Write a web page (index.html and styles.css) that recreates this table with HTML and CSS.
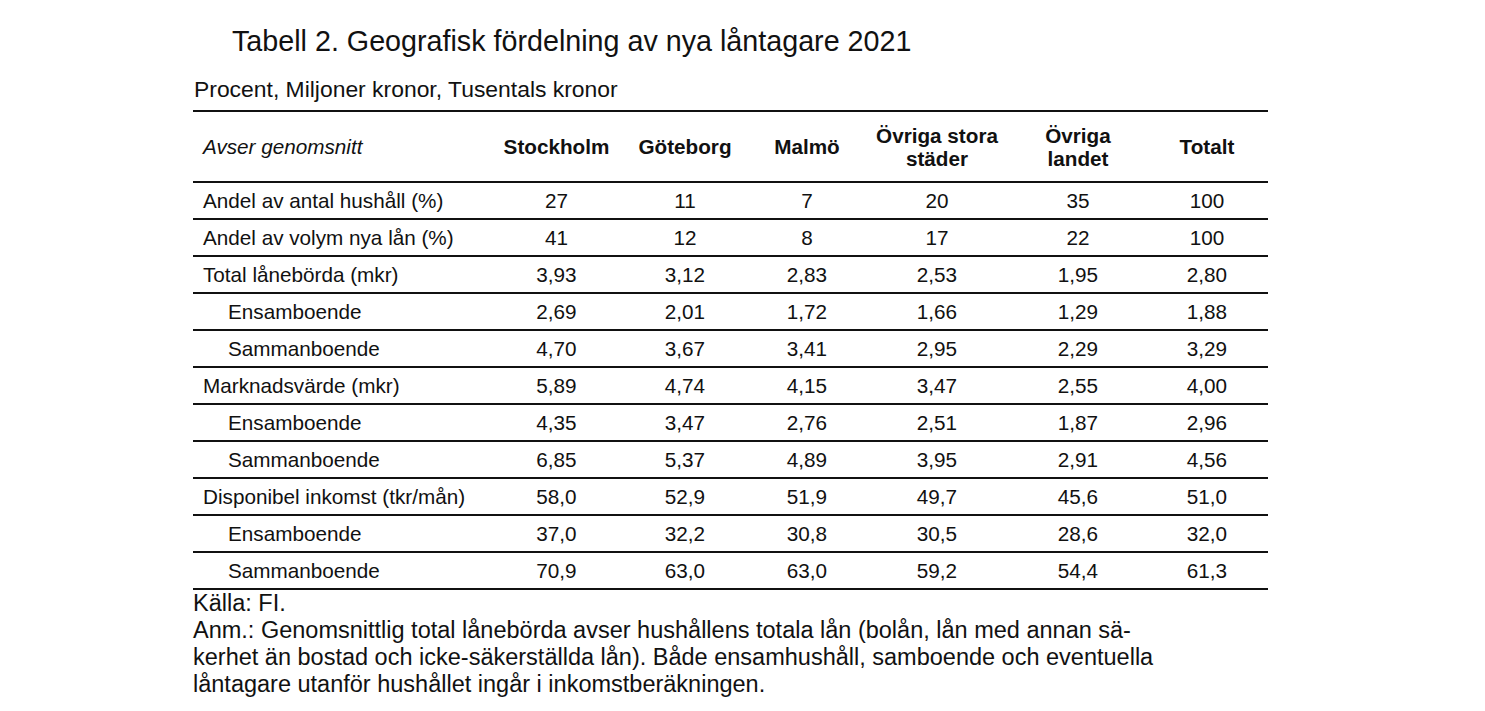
FILE: index.html
```html
<!DOCTYPE html>
<html lang="sv">
<head>
<meta charset="utf-8">
<title>Tabell 2</title>
<link rel="stylesheet" href="styles.css">
</head>
<body>
<div class="page">
  <h1 class="title">Tabell 2. Geografisk fördelning av nya låntagare 2021</h1>
  <p class="subtitle">Procent, Miljoner kronor, Tusentals kronor</p>
  <table class="data">
    <colgroup>
      <col class="c-label"><col class="c-sth"><col class="c-gbg"><col class="c-mmo"><col class="c-ovs"><col class="c-ovl"><col class="c-tot">
    </colgroup>
    <thead>
      <tr>
        <th class="label">Avser genomsnitt</th>
        <th>Stockholm</th>
        <th>Göteborg</th>
        <th>Malmö</th>
        <th>Övriga stora<br>städer</th>
        <th>Övriga<br>landet</th>
        <th>Totalt</th>
      </tr>
    </thead>
    <tbody>
      <tr><td class="label">Andel av antal hushåll (%)</td><td>27</td><td>11</td><td>7</td><td>20</td><td>35</td><td>100</td></tr>
      <tr><td class="label">Andel av volym nya lån (%)</td><td>41</td><td>12</td><td>8</td><td>17</td><td>22</td><td>100</td></tr>
      <tr><td class="label">Total lånebörda (mkr)</td><td>3,93</td><td>3,12</td><td>2,83</td><td>2,53</td><td>1,95</td><td>2,80</td></tr>
      <tr><td class="label sub">Ensamboende</td><td>2,69</td><td>2,01</td><td>1,72</td><td>1,66</td><td>1,29</td><td>1,88</td></tr>
      <tr><td class="label sub">Sammanboende</td><td>4,70</td><td>3,67</td><td>3,41</td><td>2,95</td><td>2,29</td><td>3,29</td></tr>
      <tr><td class="label">Marknadsvärde (mkr)</td><td>5,89</td><td>4,74</td><td>4,15</td><td>3,47</td><td>2,55</td><td>4,00</td></tr>
      <tr><td class="label sub">Ensamboende</td><td>4,35</td><td>3,47</td><td>2,76</td><td>2,51</td><td>1,87</td><td>2,96</td></tr>
      <tr><td class="label sub">Sammanboende</td><td>6,85</td><td>5,37</td><td>4,89</td><td>3,95</td><td>2,91</td><td>4,56</td></tr>
      <tr><td class="label">Disponibel inkomst (tkr/mån)</td><td>58,0</td><td>52,9</td><td>51,9</td><td>49,7</td><td>45,6</td><td>51,0</td></tr>
      <tr><td class="label sub">Ensamboende</td><td>37,0</td><td>32,2</td><td>30,8</td><td>30,5</td><td>28,6</td><td>32,0</td></tr>
      <tr><td class="label sub">Sammanboende</td><td>70,9</td><td>63,0</td><td>63,0</td><td>59,2</td><td>54,4</td><td>61,3</td></tr>
    </tbody>
  </table>
  <div class="notes">
    <p>Källa: FI.</p>
    <p>Anm.: Genomsnittlig total lånebörda avser hushållens totala lån (bolån, lån med annan sä-<br>kerhet än bostad och icke-säkerställda lån). Både ensamhushåll, samboende och eventuella<br>låntagare utanför hushållet ingår i inkomstberäkningen.</p>
  </div>
</div>
</body>
</html>
```
FILE: styles.css
```css
html, body {
  margin: 0;
  padding: 0;
  background: #fff;
}
body {
  font-family: "Liberation Sans", Arial, sans-serif;
  color: #111;
}
.page {
  padding: 25px 0 0 193px;
}
.title {
  margin: 0 0 0 39px;
  font-size: 28.7px;
  font-weight: normal;
  line-height: 33px;
}
.subtitle {
  margin: 15px 0 0 1px;
  font-size: 22.9px;
  line-height: 32px;
}
.data {
  margin-top: 5px;
  border-collapse: collapse;
  width: 1075px;
  table-layout: fixed;
  font-size: 20.7px;
  border-top: 2px solid #111;
}
.c-label { width: 300px; }
.c-sth { width: 127px; }
.c-gbg { width: 130px; }
.c-mmo { width: 114px; }
.c-ovs { width: 146px; }
.c-ovl { width: 136px; }
.c-tot { width: 122px; }
.data th {
  font-weight: bold;
  text-align: center;
  line-height: 23px;
  height: 69px;
  padding: 0;
  vertical-align: middle;
}
.data th.label {
  font-weight: normal;
  font-style: italic;
  text-align: left;
  padding-left: 10px;
}
.data thead tr {
  border-bottom: 2px solid #111;
}
.data tbody tr {
  border-bottom: 2px solid #111;
}
.data td {
  height: 35px;
  padding: 0;
  text-align: center;
  line-height: 24px;
  vertical-align: middle;
}
.data td.label {
  text-align: left;
  padding-left: 10px;
}
.data td.sub {
  padding-left: 35px;
}
.notes {
  font-size: 23.5px;
  line-height: 27px;
  padding-top: 0;
}
.notes p {
  margin: 0;
}
```
